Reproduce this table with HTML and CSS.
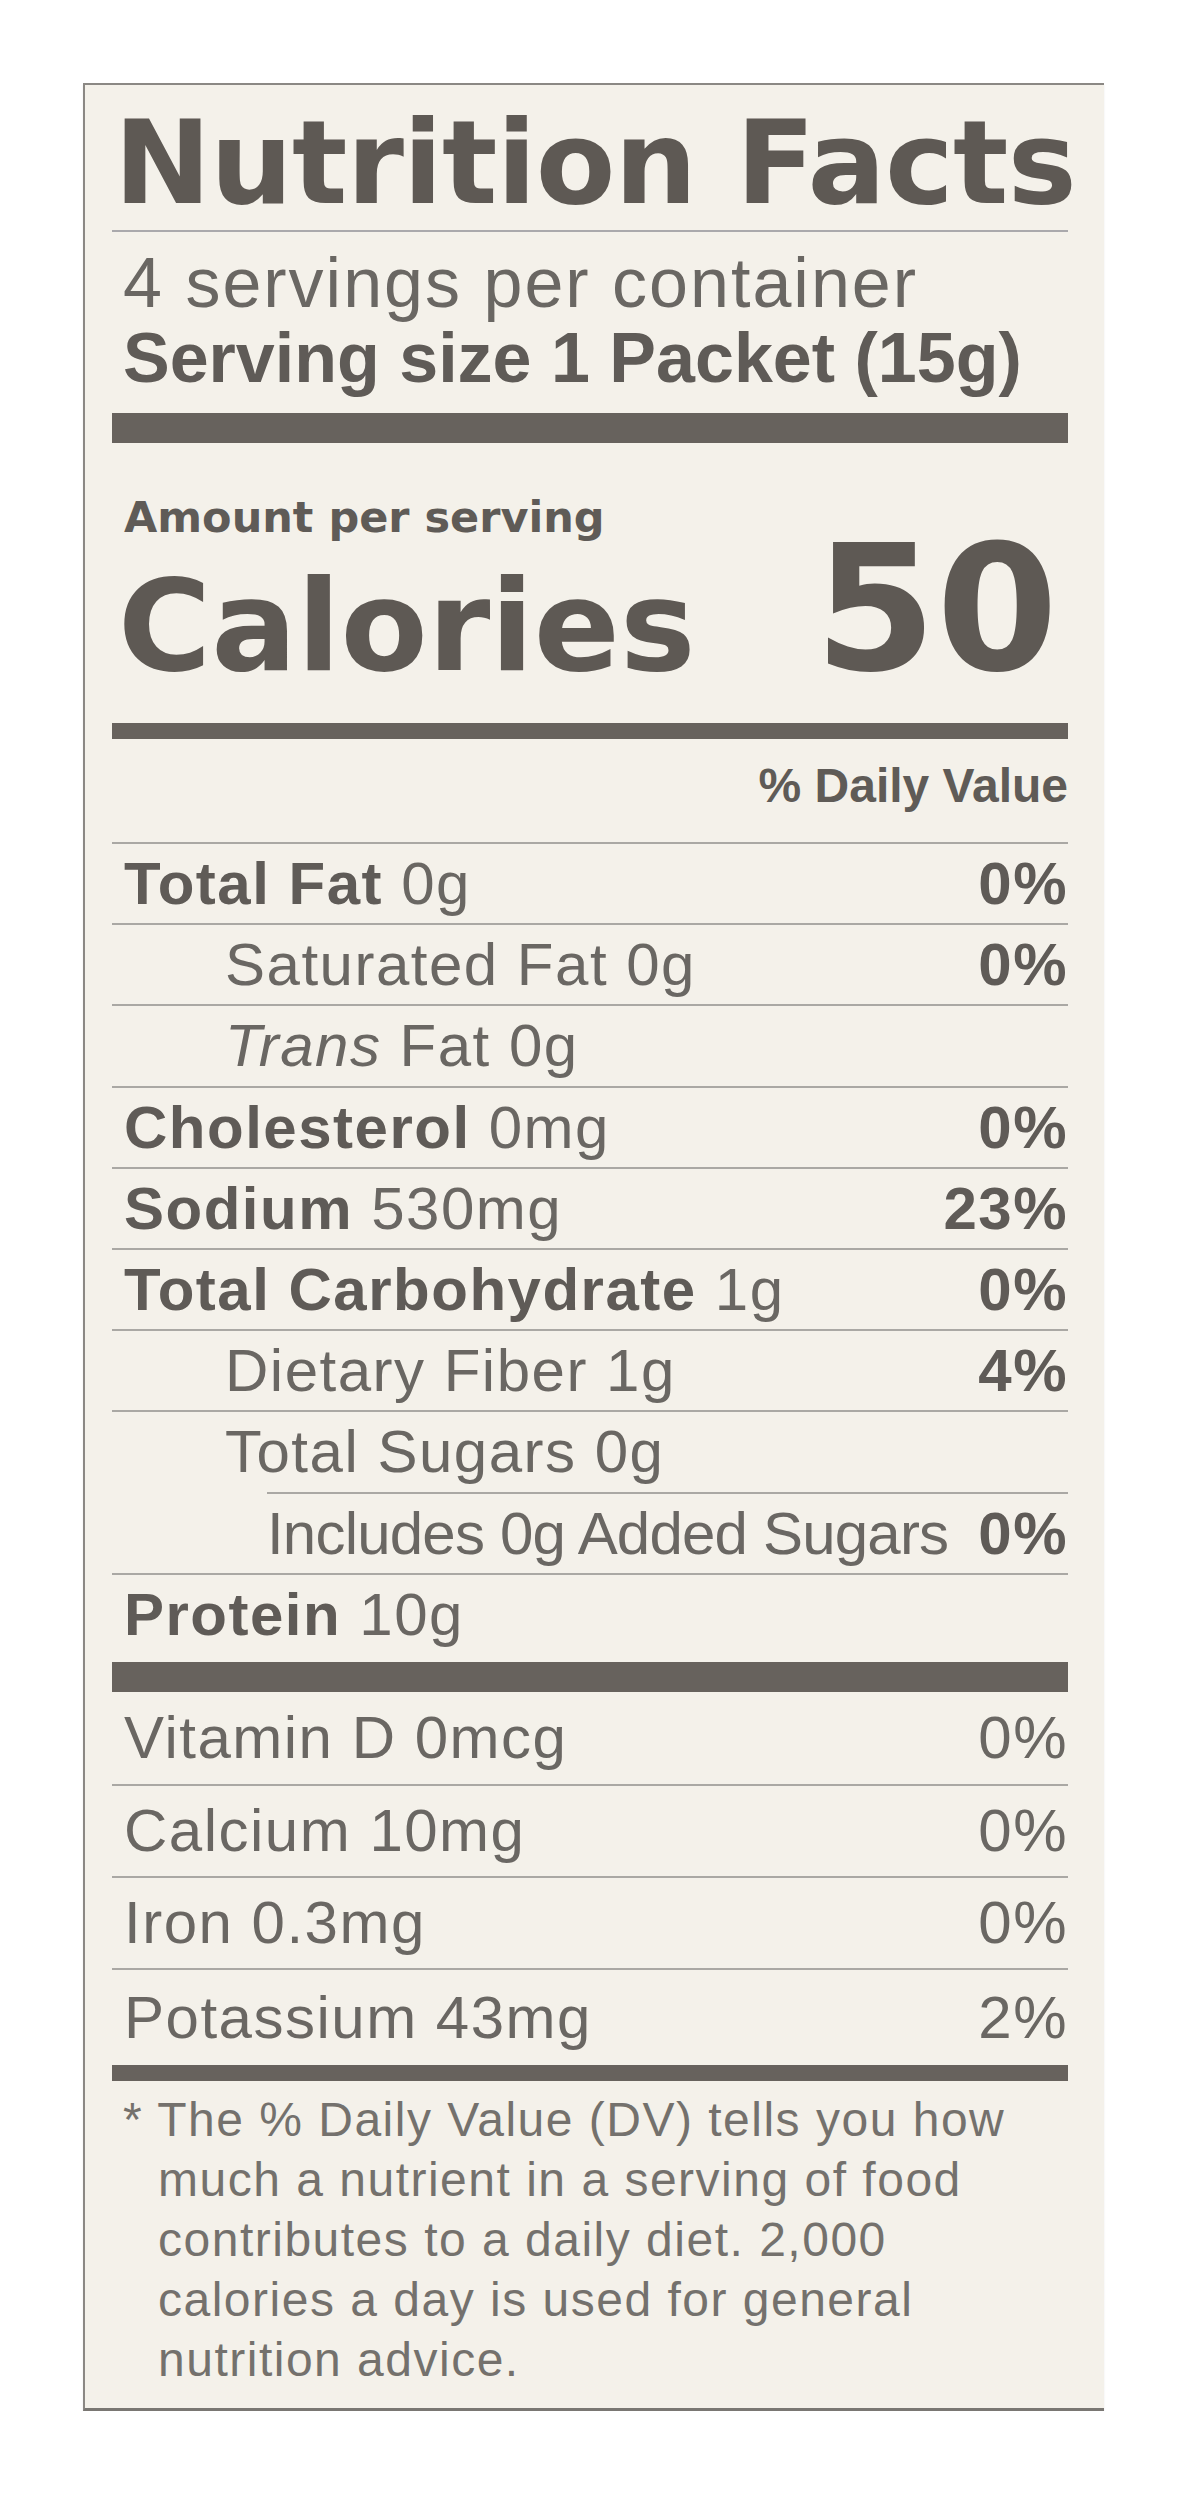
FILE: index.html
```html
<!DOCTYPE html>
<html lang="en">

<head>
    <meta charset="UTF-8">
    <meta name="viewport" content="width=device-width, initial-scale=1.0">
    <title>Nutrition Facts</title>
    <link rel="stylesheet" href="styles.css">
</head>

<body>
    <div class="label">
        <h1 class="title">Nutrition Facts</h1>
        <div class="rule"></div>
        <div class="servings">
            <div class="per-container">4 servings per container</div>
            <div class="size">Serving size 1 Packet (15g)</div>
        </div>
        <div class="bar bar-thick"></div>
        <div class="amount">Amount per serving</div>
        <div class="calories">
            <span class="cal-label">Calories</span>
            <span class="cal-value">50</span>
        </div>
        <div class="bar bar-mid"></div>
        <div class="dv-head">% Daily Value</div>

        <div class="row"><span><b>Total Fat</b> 0g</span><b>0%</b></div>
        <div class="row sub"><span>Saturated Fat 0g</span><b>0%</b></div>
        <div class="row sub"><span><i>Trans</i> Fat 0g</span></div>
        <div class="row"><span><b>Cholesterol</b> 0mg</span><b>0%</b></div>
        <div class="row"><span><b>Sodium</b> 530mg</span><b>23%</b></div>
        <div class="row"><span><b>Total Carbohydrate</b> 1g</span><b>0%</b></div>
        <div class="row sub"><span>Dietary Fiber 1g</span><b>4%</b></div>
        <div class="row sub"><span>Total Sugars 0g</span></div>
        <div class="row sub2"><span class="tight">Includes 0g Added Sugars</span><b>0%</b></div>
        <div class="row protein"><span><b>Protein</b> 10g</span></div>

        <div class="bar bar-thick"></div>
        <div class="vit"><span>Vitamin D 0mcg</span><span>0%</span></div>
        <div class="vit"><span>Calcium 10mg</span><span>0%</span></div>
        <div class="vit"><span>Iron 0.3mg</span><span>0%</span></div>
        <div class="vit last"><span>Potassium 43mg</span><span>2%</span></div>
        <div class="bar bar-mid"></div>

        <p class="footnote">* The % Daily Value (DV) tells you how<br>much a nutrient in a serving of food<br>contributes to a daily diet. 2,000<br>calories a day is used for general<br>nutrition advice.</p>
    </div>
</body>

</html>
```

FILE: styles.css
```css
body {
    margin: 0;
    background-color: #ffffff;
    font-family: 'Liberation Sans', Arial, sans-serif;
    color: #6a6763;
}

.label {
    box-sizing: border-box;
    width: 1021px;
    margin: 83px 0 0 83px;
    padding: 20px 36px 18px 27px;
    background-color: #f4f1ea;
    border-top: 2px solid #8b8884;
    border-left: 2px solid #8b8884;
    border-bottom: 3px solid #7a7773;
    box-shadow: 0 2px 2px rgba(0, 0, 0, 0.08);
}

b {
    font-weight: bold;
    color: #5f5b57;
}

.title {
    margin: 0;
    padding-left: 2px;
    font-family: 'DejaVu Sans', sans-serif;
    font-weight: bold;
    font-size: 116px;
    line-height: 116px;
    letter-spacing: -0.8px;
    color: #5e5954;
    white-space: nowrap;
}

.rule {
    height: 2px;
    margin-top: 9px;
    background-color: #aaa9ac;
}

.servings {
    margin-top: 14px;
    padding-left: 11px;
    font-size: 70px;
    line-height: 75px;
    white-space: nowrap;
}

.per-container {
    letter-spacing: 2px;
}

.size {
    font-weight: bold;
    color: #5f5b57;
}

.bar {
    background-color: #67625d;
}

.bar-thick {
    height: 30px;
}

.bar-mid {
    height: 16px;
}

.servings + .bar-thick {
    margin-top: 17px;
}

.amount {
    margin-top: 54px;
    padding-left: 12px;
    font-family: 'DejaVu Sans', sans-serif;
    font-weight: bold;
    font-size: 43px;
    line-height: 40px;
    color: #5f5b57;
}

.calories {
    display: flex;
    justify-content: space-between;
    align-items: baseline;
    margin-top: 3px;
    padding: 0 10px 0 6px;
    font-family: 'DejaVu Sans', sans-serif;
    font-weight: bold;
    color: #5e5954;
}

.cal-label {
    font-size: 127px;
    line-height: 1;
}

.cal-value {
    font-size: 175px;
    line-height: 140px;
}

.calories + .bar-mid {
    margin-top: 33px;
}

.dv-head {
    margin-top: 22px;
    text-align: right;
    font-weight: bold;
    font-size: 48px;
    line-height: 50px;
    color: #5f5b57;
}

.row {
    box-sizing: border-box;
    display: flex;
    justify-content: space-between;
    height: 81.2px;
    padding-left: 12px;
    border-top: 2px solid #aaa8a4;
    font-size: 60px;
    line-height: 79px;
    letter-spacing: 1.5px;
    white-space: nowrap;
}

.dv-head + .row {
    margin-top: 31px;
}

.row.sub {
    padding-left: 113px;
}

.row.sub2 {
    margin-left: 155px;
    padding-left: 0;
}

.tight {
    letter-spacing: -0.8px;
}

.row.protein {
    height: 89px;
}

.vit {
    box-sizing: border-box;
    display: flex;
    justify-content: space-between;
    height: 92px;
    padding-left: 12px;
    font-size: 60px;
    line-height: 92px;
    letter-spacing: 1.5px;
    white-space: nowrap;
}

.vit + .vit {
    border-top: 2px solid #aaa8a4;
    line-height: 90px;
}

.vit.last {
    height: 97px;
    line-height: 95px;
}

.footnote {
    margin: 9px 0 0 0;
    padding-left: 46px;
    text-indent: -35px;
    font-size: 48px;
    line-height: 60px;
    letter-spacing: 1.5px;
    color: #74716d;
    white-space: nowrap;
}
```
